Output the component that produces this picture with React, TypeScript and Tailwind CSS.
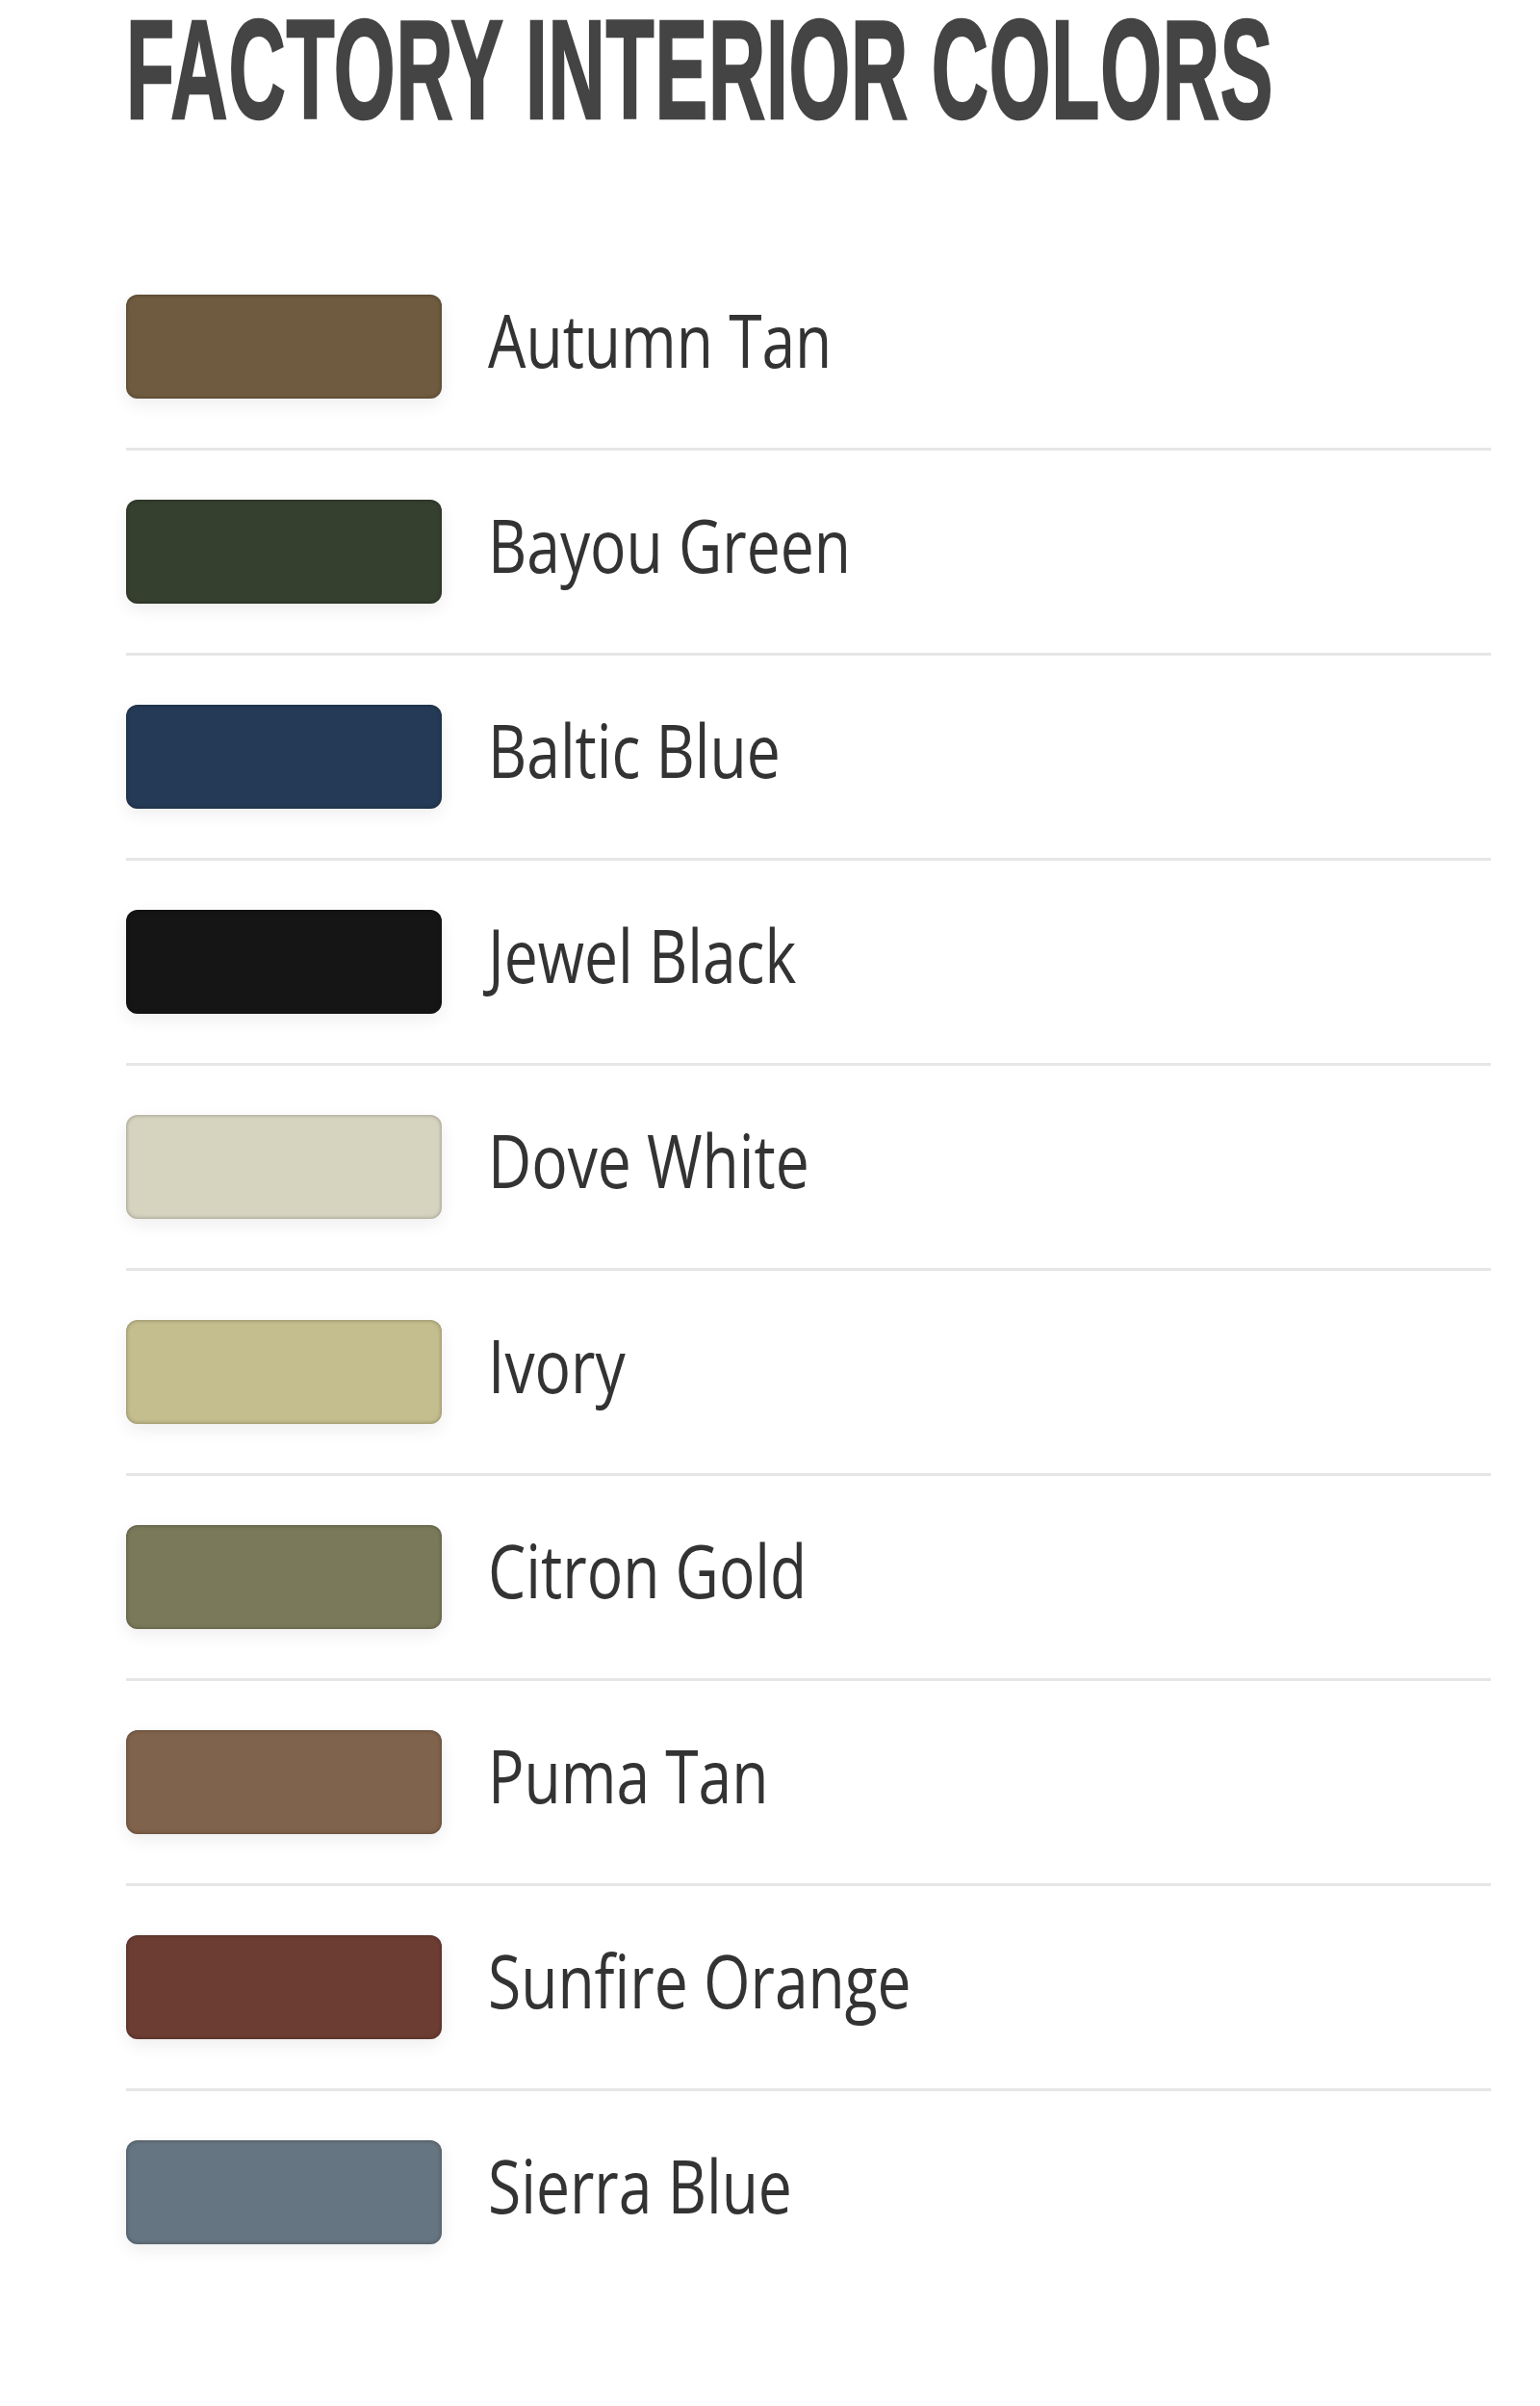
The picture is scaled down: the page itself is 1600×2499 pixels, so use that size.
const colors = [
  { name: "Autumn Tan", hex: "bg-[#6f5b3f]" },
  { name: "Bayou Green", hex: "bg-[#36402f]" },
  { name: "Baltic Blue", hex: "bg-[#243a56]" },
  { name: "Jewel Black", hex: "bg-[#151515]" },
  { name: "Dove White", hex: "bg-[#d6d4bf]" },
  { name: "Ivory", hex: "bg-[#c4bd8d]" },
  { name: "Citron Gold", hex: "bg-[#7a795a]" },
  { name: "Puma Tan", hex: "bg-[#80634c]" },
  { name: "Sunfire Orange", hex: "bg-[#6c3d33]" },
  { name: "Sierra Blue", hex: "bg-[#657581]" },
];

export default function App() {
  return (
    <main className="min-h-screen bg-white pl-[131px] pr-[51px]">
      {/* Heading */}
      <h1 className="h-[146px] mb-[109px] text-[82px] leading-none font-bold uppercase text-[#444444] font-['Liberation_Sans',sans-serif] whitespace-nowrap [-webkit-text-stroke:1.5px_#444444]">
        <span className="inline-block origin-top-left scale-y-[1.78] tracking-[0.8px]">Factory Interior Colors</span>
      </h1>

      {/* Swatch list */}
      <ul>
        {colors.map((c, i) => (
          <li
            key={c.name}
            className={
              "flex items-center gap-[48px] pt-[51px] pb-[51px] " +
              (i < colors.length - 1 ? "border-b-[3px] border-[#e6e6e6]" : "")
            }
          >
            <div
              className={`w-[328px] h-[108px] shrink-0 rounded-[12px] ${c.hex} shadow-[inset_0_0_4px_rgba(0,0,0,0.35),0_6px_18px_rgba(0,0,0,0.07)]`}
            />
            <span className="inline-block origin-left scale-x-[0.82] text-[76px] leading-none text-[#333333] font-['Open_Sans',sans-serif] font-normal -mt-[14px] whitespace-nowrap">
              {c.name}
            </span>
          </li>
        ))}
      </ul>
    </main>
  );
}
